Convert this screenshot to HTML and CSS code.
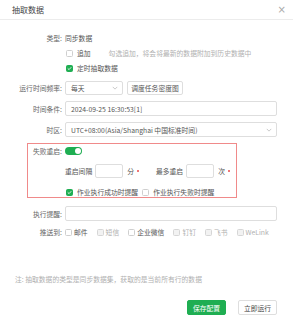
FILE: index.html
```html
<!DOCTYPE html>
<html lang="zh">
<head>
<meta charset="utf-8">
<link rel="stylesheet" href="styles.css">
</head>
<body>
<div class="dialog">
  <div class="header">
    <span class="title">抽取数据</span>
    <span class="close">×</span>
  </div>
  <div class="form">
    <div class="row r-type">
      <span class="label">类型:</span>
      <span class="value">同步数据</span>
    </div>
    <div class="row r-tight">
      <span></span>
      <span class="check-line"><i class="cb"></i><span class="value">追加</span><span class="hint">勾选追加，将会将最新的数据附加到历史数据中</span></span>
    </div>
    <div class="row r-tight">
      <span></span>
      <span class="check-line"><i class="cb on"><svg viewBox="0 0 8 8"><polyline points="1.6,4.2 3.3,5.8 6.4,2.4"/></svg></i><span class="value">定时抽取数据</span></span>
    </div>
    <div class="row r-gap">
      <span class="label">运行时间频率:</span>
      <span class="ctrl-line">
        <span class="select small"><span>每天</span><svg class="chev" viewBox="0 0 8 5"><polyline points="1,1 4,4 7,1"/></svg></span>
        <span class="btn-plain">调度任务密度图</span>
      </span>
    </div>
    <div class="row r-gap">
      <span class="label">时间条件:</span>
      <span class="input">2024-09-25 16:30:53[1]</span>
    </div>
    <div class="row r-gap7">
      <span class="label">时区:</span>
      <span class="select"><span>UTC+08:00(Asia/Shanghai 中国标准时间)</span><svg class="chev" viewBox="0 0 8 5"><polyline points="1,1 4,4 7,1"/></svg></span>
    </div>

    <div class="redbox">
      <div class="row inner">
        <span class="label">失败重启:</span>
        <span><i class="toggle"><i class="knob"></i></i></span>
      </div>
      <div class="row inner r-gap">
        <span></span>
        <span class="retry">
          <span class="value">重启间隔</span>
          <span class="num"></span>
          <span class="unit">分</span><i class="dot"></i>
          <span class="value second">最多重启</span>
          <span class="num"></span>
          <span class="unit">次</span><i class="dot"></i>
        </span>
      </div>
      <div class="row inner last">
        <span></span>
        <span class="check-line">
          <i class="cb on"><svg viewBox="0 0 8 8"><polyline points="1.6,4.2 3.3,5.8 6.4,2.4"/></svg></i><span class="value">作业执行成功时提醒</span>
          <i class="cb cb2"></i><span class="value">作业执行失败时提醒</span>
        </span>
      </div>
    </div>

    <div class="row r-remind">
      <span class="label">执行提醒:</span>
      <span class="input"></span>
    </div>
    <div class="row r-push">
      <span class="label">推送到:</span>
      <span class="push">
        <span class="item"><i class="cb"></i><span class="value">邮件</span></span>
        <span class="item"><i class="cb dis"></i><span class="muted">短信</span></span>
        <span class="item"><i class="cb"></i><span class="value">企业微信</span></span>
        <span class="item"><i class="cb dis"></i><span class="muted">钉钉</span></span>
        <span class="item"><i class="cb dis"></i><span class="muted">飞书</span></span>
        <span class="item"><i class="cb dis"></i><span class="muted">WeLink</span></span>
      </span>
    </div>
  </div>
  <div class="note">注: 抽取数据的类型是同步数据集，获取的是当前所有行的数据</div>
  <div class="footer">
    <span class="btn primary">保存配置</span>
    <span class="btn">立即运行</span>
  </div>
</div>
</body>
</html>
```

FILE: styles.css
```css
* { box-sizing: border-box; }
html, body { margin: 0; padding: 0; background: #fff; }
body {
  font-family: "Noto Sans CJK SC", "Noto Sans", sans-serif;
  font-size: 6.8px;
  line-height: 10px;
  color: #444;
}
.dialog { width: 293px; height: 321px; background: #fff; }
.header {
  height: 20px;
  border-bottom: 1px solid #ececec;
  display: flex;
  align-items: center;
  justify-content: space-between;
  padding: 0 7px 0 12px;
}
.title { font-size: 8px; color: #444; }
.close { font-size: 10px; color: #aaa; font-family: "DejaVu Sans", sans-serif; }

.form { padding: 11px 16px 0 0; }
.row {
  display: grid;
  grid-template-columns: 62px 1fr;
  column-gap: 3px;
  align-items: center;
  height: 14px;
}
.r-tight { margin-top: 1px; }
.r-gap { margin-top: 6px; }
.r-gap7 { margin-top: 7px; }
.label { text-align: right; color: #666; white-space: nowrap; }
.value { color: #555; white-space: nowrap; }
.muted { color: #b0b0b0; white-space: nowrap; }
.hint { color: #b0b0b0; margin-left: 18px; white-space: nowrap; }

.check-line { display: flex; align-items: center; padding-left: 1px; }
.cb {
  display: inline-flex;
  align-items: center;
  justify-content: center;
  width: 7px; height: 7px;
  border: 1px solid #cfcfcf;
  border-radius: 1.5px;
  background: #fff;
  margin-right: 4px;
  flex: none;
}
.cb.on { background: #1fae52; border-color: #1fae52; }
.cb.dis { background: #f2f2f2; border-color: #d6d6d6; }
.cb svg { width: 7px; height: 7px; }
.cb svg polyline { fill: none; stroke: #fff; stroke-width: 1.3; stroke-linecap: round; stroke-linejoin: round; }
.cb2 { margin-left: 4px; }

.ctrl-line { display: flex; align-items: center; gap: 4px; height: 14px; }
.select, .input {
  height: 15px;
  border: 1px solid #dedede;
  border-radius: 2px;
  display: flex;
  align-items: center;
  justify-content: space-between;
  padding: 0 4px 0 5px;
  color: #555;
  white-space: nowrap;
}
.select.small { width: 58px; height: 14px; }
.chev { width: 6px; height: 4px; }
.chev polyline { fill: none; stroke: #b0b0b0; stroke-width: 0.9; }
.btn-plain {
  height: 14px;
  width: 56px;
  border: 1px solid #dedede;
  border-radius: 2px;
  display: flex;
  align-items: center;
  justify-content: center;
  color: #555;
  white-space: nowrap;
}

.redbox {
  margin: 7px 0 0 27px;
  width: 210px;
  border: 1px solid #f08a8a;
}
.redbox .row { grid-template-columns: 34px 1fr; }
.redbox .last { height: 10px; margin-top: 9px; }
.toggle {
  display: block;
  width: 17px; height: 8px;
  border-radius: 4px;
  background: #1fae52;
  position: relative;
}
.knob {
  position: absolute;
  right: 1px; top: 1px;
  width: 6px; height: 6px;
  border-radius: 50%;
  background: #fff;
}
.retry { display: flex; align-items: center; }
.num {
  width: 28px; height: 14px;
  border: 1px solid #dedede;
  border-radius: 2px;
  margin-left: 3px;
}
.unit { margin-left: 4px; color: #555; }
.dot { width: 2px; height: 2px; border-radius: 50%; background: #e84a4a; margin-left: 3px; }
.second { margin-left: 17px; }

.r-remind { margin-top: 8px; }
.r-push { margin-top: 5px; }
.push { display: flex; align-items: center; }
.item { display: flex; align-items: center; margin-right: 9px; }
.item .cb { margin-right: 2px; }

.note { margin-top: 33px; padding-left: 15px; color: #b0b0b0; height: 14px; line-height: 14px; white-space: nowrap; }
.footer {
  display: flex;
  justify-content: flex-end;
  gap: 12px;
  padding-right: 16px;
  margin-top: 14px;
}
.btn {
  height: 15px;
  width: 39px;
  border: 1px solid #dedede;
  border-radius: 2px;
  display: flex;
  align-items: center;
  justify-content: center;
  color: #444;
  white-space: nowrap;
}
.btn.primary { background: #1fae52; border-color: #1fae52; color: #fff; }
```
